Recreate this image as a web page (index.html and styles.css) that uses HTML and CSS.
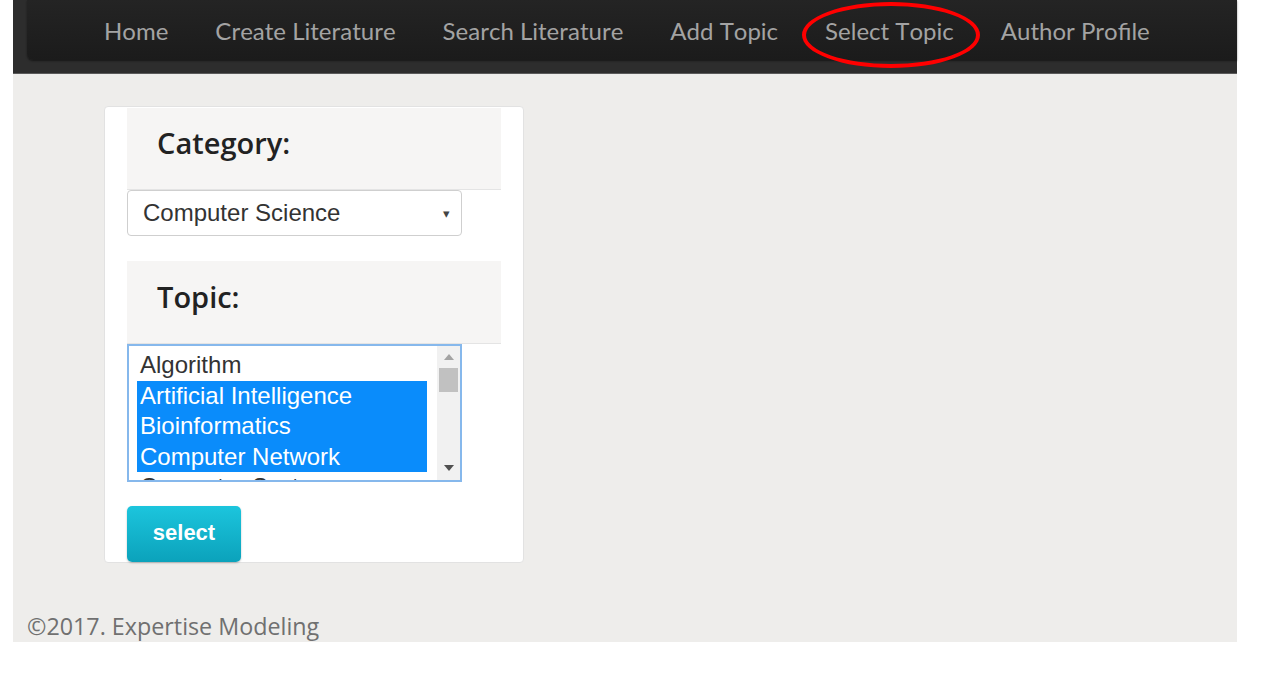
FILE: index.html
```html
<!DOCTYPE html>
<html>
<head>
<meta charset="utf-8">
<link rel="stylesheet" href="styles.css">
</head>
<body>
<div class="page">
  <header class="navbar">
    <nav class="nav-inner">
      <a class="nav-link" href="#">Home</a>
      <a class="nav-link" href="#">Create Literature</a>
      <a class="nav-link" href="#">Search Literature</a>
      <a class="nav-link" href="#">Add Topic</a>
      <a class="nav-link nav-marked" href="#">Select Topic</a>
      <a class="nav-link" href="#">Author Profile</a>
    </nav>
  </header>
  <main class="content">
    <section class="card">
      <div class="heading"><h3>Category:</h3></div>
      <div class="select-box">
        <span>Computer Science</span>
        <span class="caret">▾</span>
      </div>
      <div class="heading heading-topic"><h3>Topic:</h3></div>
      <div class="listbox">
        <div class="options">
          <div class="opt">Algorithm</div>
          <div class="opt sel">Artificial Intelligence</div>
          <div class="opt sel">Bioinformatics</div>
          <div class="opt sel">Computer Network</div>
          <div class="opt">Computer System</div>
        </div>
        <div class="scrollbar">
          <span class="arr up"></span>
          <span class="thumb"></span>
          <span class="arr down"></span>
        </div>
      </div>
      <button class="btn">select</button>
    </section>
  </main>
  <footer class="footer">©2017. Expertise Modeling</footer>
</div>
</body>
</html>
```

FILE: styles.css
```css
html, body {
  margin: 0;
  padding: 0;
  background: #ffffff;
}
.page {
  margin-left: 13px;
  width: 1224px;
  height: 642px;
  background: #eeedeb;
  display: flex;
  flex-direction: column;
}
.navbar {
  height: 73px;
  background: #2d2d2d;
  border-bottom: 1px solid #5a5a5a;
}
.nav-inner {
  margin-left: 14px;
  height: 60px;
  background: linear-gradient(#242424, #1b1b1b);
  border-bottom-left-radius: 6px;
  box-shadow: 0 1px 2px rgba(0,0,0,0.5);
  display: flex;
  align-items: flex-start;
  padding-left: 77px;
}
.nav-link {
  position: relative;
  margin-top: 16px;
  font-family: "Lato", "Open Sans", sans-serif;
  font-size: 24px;
  line-height: 30px;
  font-kerning: none;
  color: #a3a3a3;
  text-decoration: none;
  margin-right: 47px;
  white-space: nowrap;
}
.nav-marked::after {
  content: "";
  position: absolute;
  left: -23px;
  right: -26px;
  top: -14px;
  height: 58px;
  border: 4px solid #ff0000;
  border-radius: 50%;
}
.content {
  padding: 32px 0 0 91px;
  flex: 1;
}
.card {
  width: 374px;
  height: 454px;
  background: #ffffff;
  border: 1px solid #e2e2e2;
  border-radius: 4px;
  padding: 1px 22px 0 22px;
  box-sizing: content-box;
}
.heading {
  background: #f6f5f4;
  height: 81px;
  border-bottom: 1px solid #e4e4e4;
  display: flex;
  align-items: center;
  padding-left: 30px;
}
.heading h3 {
  margin: 0;
  font-family: "Open Sans", sans-serif;
  font-weight: 600;
  font-size: 29px;
  color: #222;
  position: relative;
  top: -6px;
}
.heading-topic {
  margin-top: 25px;
  height: 82px;
}
.select-box {
  width: 335px;
  height: 46px;
  box-sizing: border-box;
  border: 1px solid #cfcfcf;
  border-radius: 4px;
  display: flex;
  align-items: center;
  justify-content: space-between;
  padding: 0 11px 0 15px;
  font-family: "Liberation Sans", Arial, sans-serif;
  font-size: 24px;
  color: #333;
}
.caret {
  font-size: 13px;
  color: #444;
}
.listbox {
  width: 335px;
  height: 138px;
  box-sizing: border-box;
  border: 2px solid #86b8ec;
  display: flex;
  overflow: hidden;
}
.options {
  flex: 1;
  padding: 4px 10px 0 8px;
  overflow: hidden;
}
.opt {
  font-family: "Liberation Sans", Arial, sans-serif;
  font-size: 24px;
  line-height: 30.5px;
  height: 30.5px;
  color: #333;
  padding-left: 3px;
  white-space: nowrap;
}
.opt.sel {
  background: #0a8cfb;
  color: #ffffff;
}
.scrollbar {
  width: 23px;
  background: #f1f1f1;
  display: flex;
  flex-direction: column;
  align-items: center;
  padding: 8px 0 0;
}
.arr {
  width: 0;
  height: 0;
  border-left: 5px solid transparent;
  border-right: 5px solid transparent;
}
.arr.up {
  border-bottom: 6px solid #a3a3a3;
  margin-bottom: 8px;
}
.thumb {
  width: 19px;
  height: 24px;
  background: #c1c1c1;
}
.arr.down {
  border-top: 6px solid #505050;
  margin-top: auto;
  margin-bottom: 9px;
}
.btn {
  margin-top: 24px;
  width: 114px;
  height: 56px;
  border: none;
  border-radius: 5px;
  background: linear-gradient(#1cc5dd, #0ba2bb);
  box-shadow: 0 1px 2px rgba(0,0,0,0.25);
  color: #ffffff;
  font-family: "Liberation Sans", Arial, sans-serif;
  font-weight: bold;
  font-size: 22px;
  padding: 0 0 3px;
}
.footer {
  font-family: "Open Sans", sans-serif;
  font-size: 23.3px;
  color: #707070;
  padding: 3px 0 0 14px;
}
```
